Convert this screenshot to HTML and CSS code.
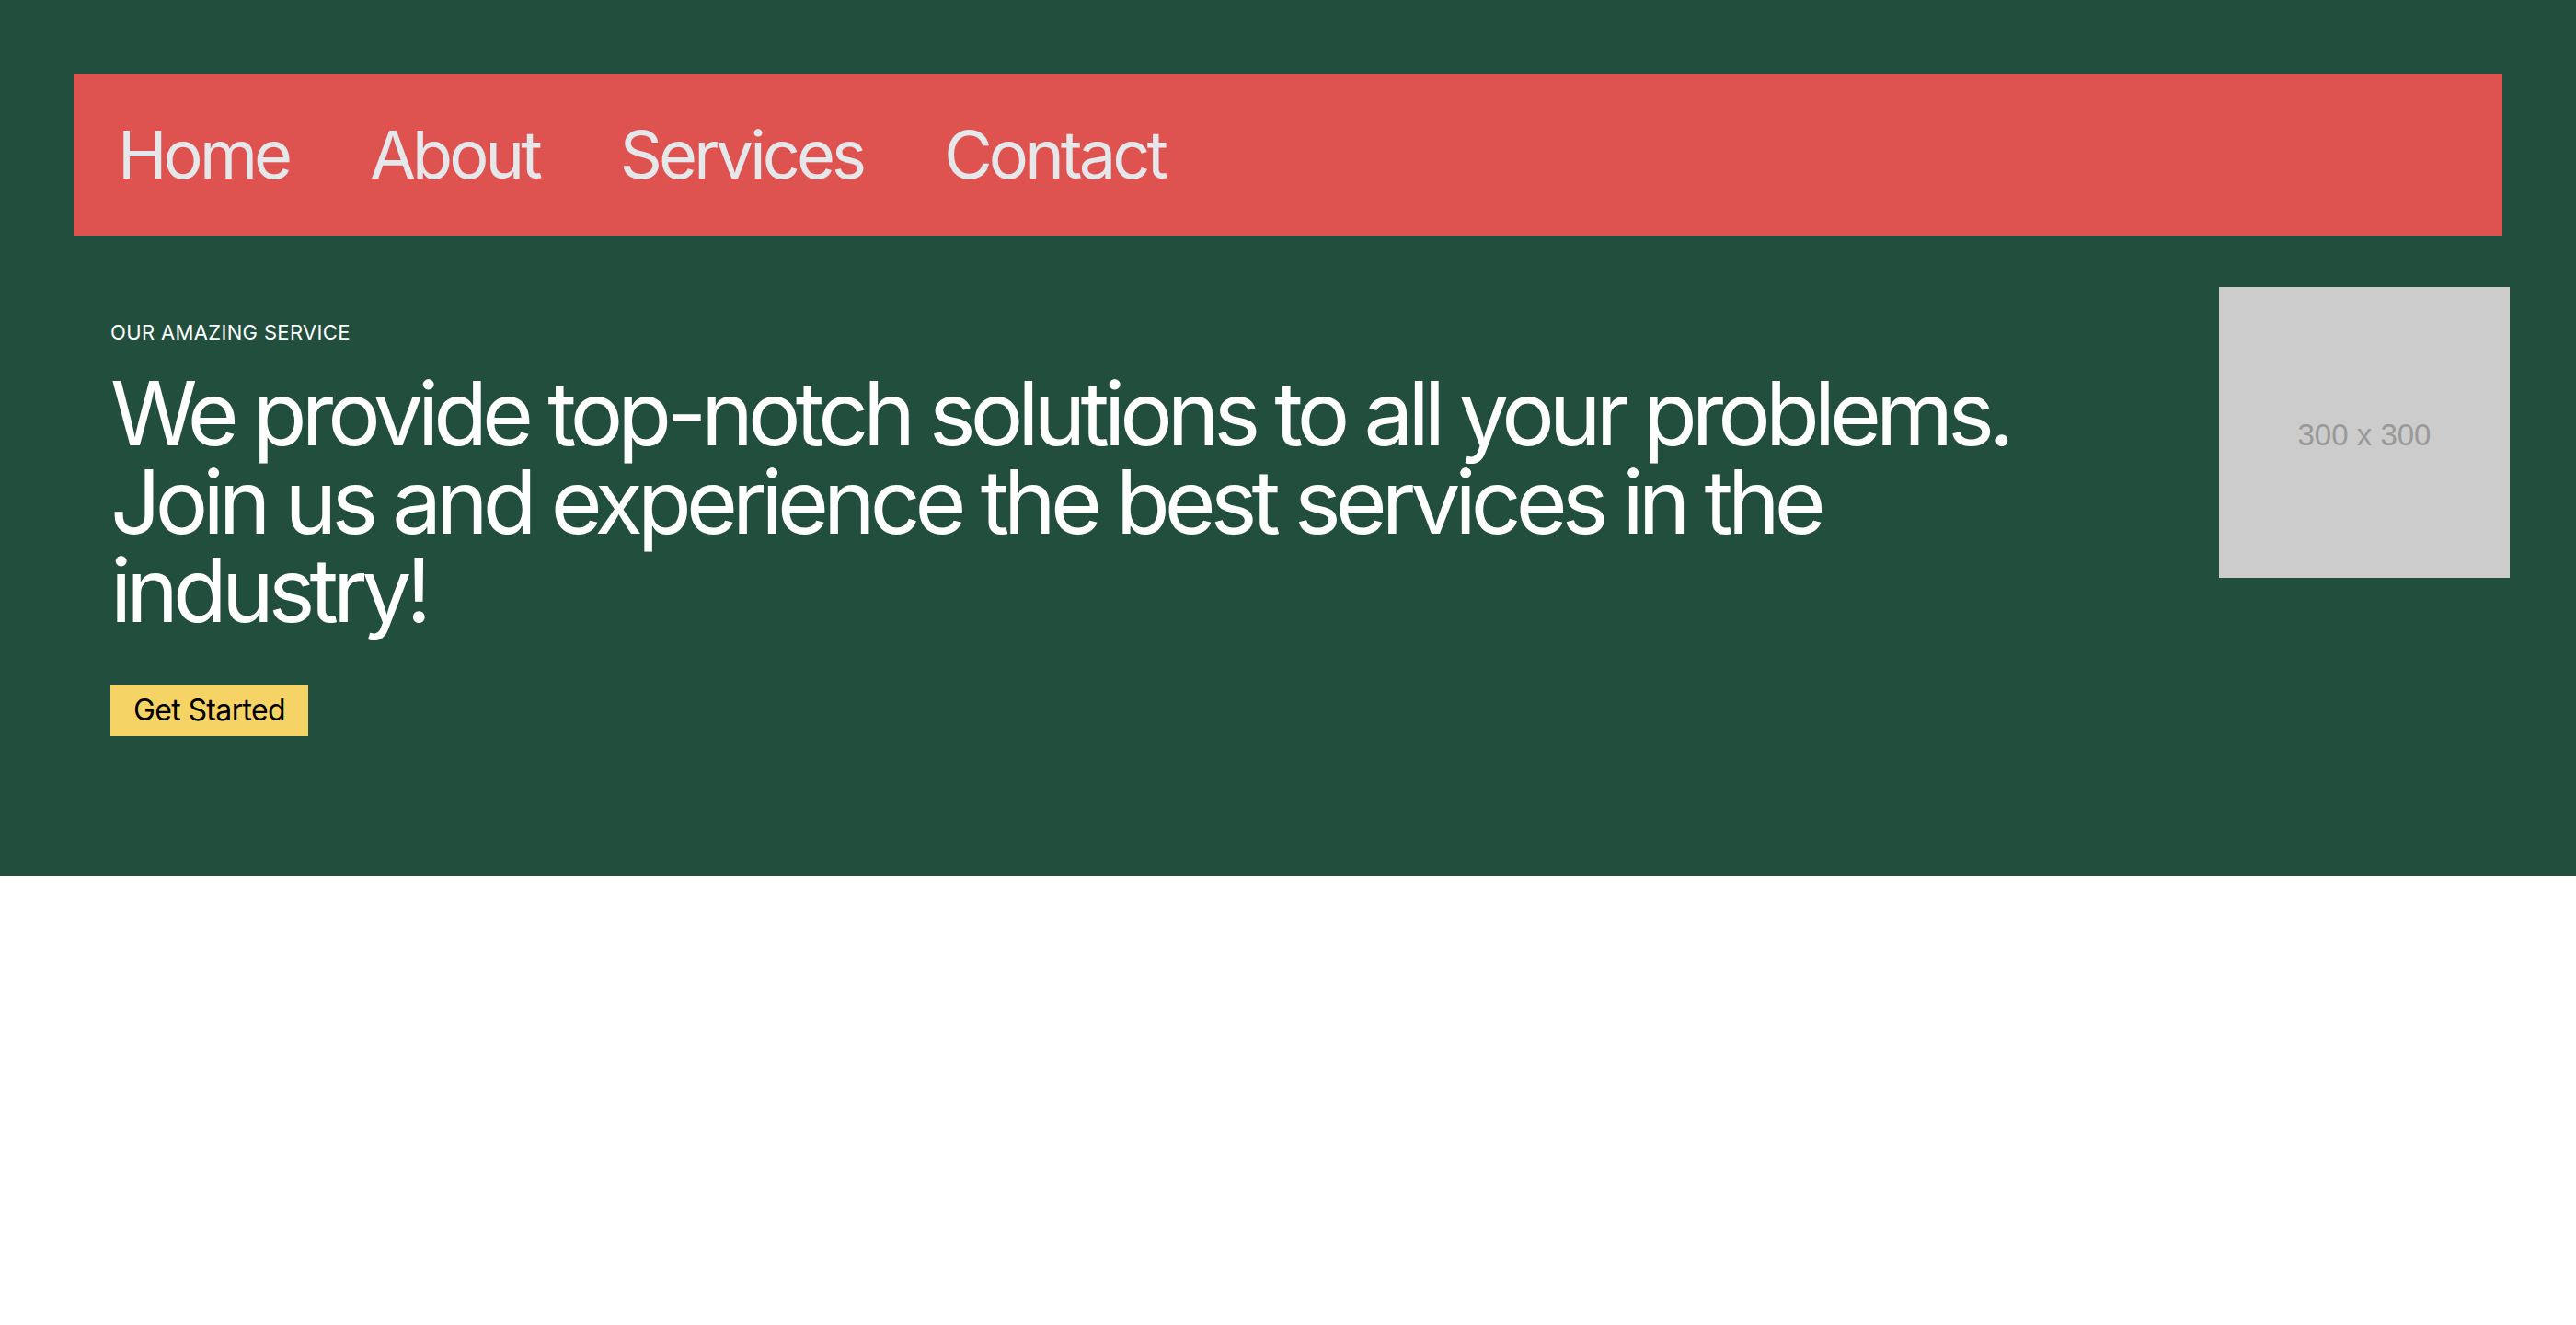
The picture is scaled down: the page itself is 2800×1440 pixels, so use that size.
FILE: index.html
```html
<!DOCTYPE html>
<html lang="en">
<head>
<meta charset="utf-8">
<title>Our Amazing Service</title>
<link rel="stylesheet" href="styles.css">
</head>
<body>
<div class="page">
  <nav class="nav">
    <a class="nav-link" href="#">Home</a>
    <a class="nav-link" href="#">About</a>
    <a class="nav-link" href="#">Services</a>
    <a class="nav-link" href="#">Contact</a>
  </nav>
  <section class="hero">
    <div class="hero-text">
      <p class="eyebrow">OUR AMAZING SERVICE</p>
      <h1 class="headline">We provide top-notch solutions to all your problems. Join us and experience the best services in the industry!</h1>
      <button class="cta">Get Started</button>
    </div>
    <div class="placeholder">300 x 300</div>
  </section>
</div>
</body>
</html>
```
FILE: styles.css
```css
html, body {
  margin: 0;
  padding: 0;
  background: #ffffff;
}
body {
  font-family: Inter, "Noto Sans", sans-serif;
}
.page {
  background: #224e3e;
  height: 952px;
  box-sizing: border-box;
  padding: 80px 72px 0 80px;
}
.nav {
  background: #de534f;
  margin-right: 8px;
  height: 176px;
  box-sizing: border-box;
  padding: 0 48px;
  display: flex;
  align-items: center;
  gap: 88px;
}
.nav-link {
  color: #e5e7eb;
  text-decoration: none;
  font-size: 72px;
  line-height: 88px;
  letter-spacing: -0.054em;
}
.hero {
  display: flex;
  justify-content: space-between;
  align-items: flex-start;
  padding: 56px 0 0 40px;
}
.hero-text {
  width: 2140px;
  padding-top: 35px;
}
.eyebrow {
  margin: 0;
  color: #ffffff;
  font-size: 22px;
  line-height: 28px;
  letter-spacing: 0.35px;
}
.headline {
  margin: 26px 0 0;
  color: #ffffff;
  font-weight: 400;
  font-size: 96px;
  line-height: 96px;
  letter-spacing: -0.062em;
}
.cta {
  margin-top: 55px;
  display: block;
  background: #f6d365;
  border: none;
  color: #000;
  font-family: Inter, "Noto Sans", sans-serif;
  font-size: 32px;
  line-height: 40px;
  letter-spacing: -0.02em;
  height: 56px;
  padding: 0 25px;
}
.placeholder {
  width: 316px;
  height: 316px;
  box-sizing: border-box;
  padding-top: 6px;
  background: #cccccc;
  color: #999999;
  font-family: "Liberation Sans", Arial, sans-serif;
  font-size: 33px;
  display: flex;
  align-items: center;
  justify-content: center;
}
```
